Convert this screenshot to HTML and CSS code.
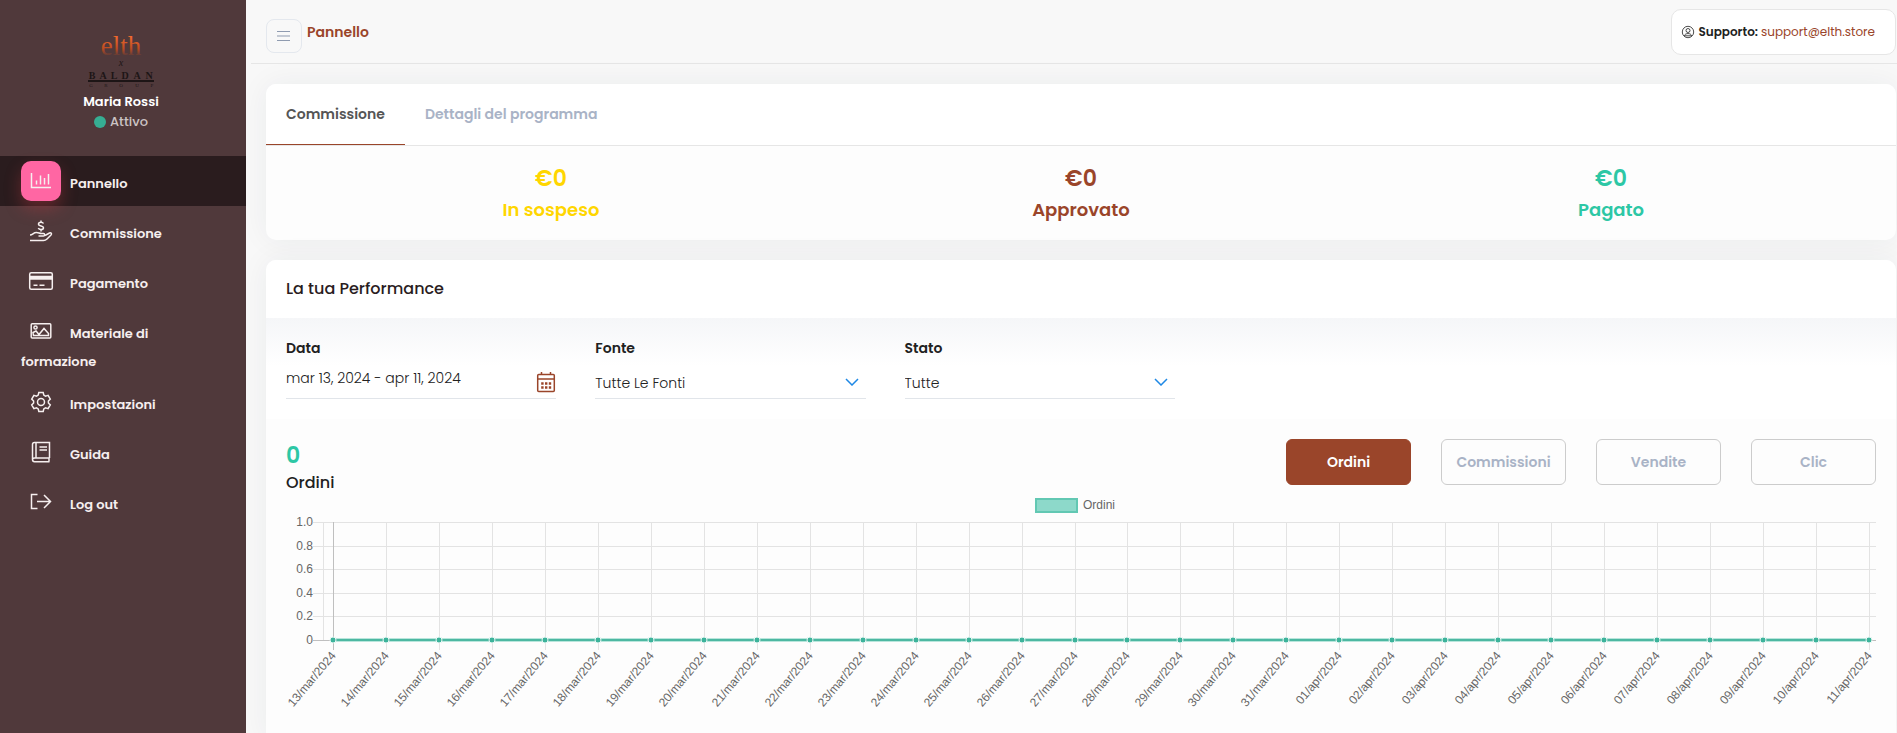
FILE: index.html
```html
<!DOCTYPE html>
<html lang="it">
<head>
    <meta charset="UTF-8">
    <meta name="viewport" content="width=device-width, initial-scale=1.0">
    <title>Pannello</title>
    <link rel="stylesheet" href="styles.css">
</head>
<body>

    <div class="sidebar">
        <div class="profile">
            <svg class="logo" width="68" height="52" viewBox="0 0 68 52">
                <defs>
                    <linearGradient id="copper" x1="0" y1="0" x2="0" y2="1">
                        <stop offset="0.2" stop-color="#f0682e"/>
                        <stop offset="0.6" stop-color="#b94a20"/>
                        <stop offset="0.85" stop-color="#50393b"/>
                    </linearGradient>
                </defs>
                <text class="logo-elth" x="34" y="18" fill="url(#copper)">elth</text>
                <text class="logo-x" x="34" y="29">x</text>
                <text class="logo-baldan" x="5 16 27 38 50 62" y="42">BALDAN</text>
                <path d="M1 44h66" stroke="#1d1516" stroke-width="2"/>
                <text class="logo-group" x="4 19 34 50 65" y="50">GROUP</text>
            </svg>
            <div class="profile-name">Maria Rossi</div>
            <div class="profile-status"><span class="dot"></span>Attivo</div>
        </div>

        <nav class="menu">
            <a href="#pannello" class="active"><svg class="icon" viewBox="-9 -11 40 40"><path d="M1.500 1v14.500h19.500M6.500 8.500v4M10.500 3.500v9M14.500 6v6.500M18.500 2v10.500"/></svg>Pannello</a>
            <a href="#commissione"><svg class="icon" viewBox="-8 -9 40 40"><path d="M14.500 3.500c-.5-1-1.500-1.300-2.500-1.300-1.500 0-2.500.7-2.500 1.800 0 2.700 5 1.200 5 3.700 0 1.200-1 1.800-2.500 1.800-1.300 0-2.300-.5-2.700-1.500M12 .5v2M12 9.500v2M1 15c3 0 3-2.500 6.500-2.500 2 0 3 1 5 1h2c1.500 0 1.500 2.500 0 2.500h-5M16 15.500l4.500-2.500c1.500-.7 2.700.7 1.500 2l-4 4c-1 1-2 1.500-3.500 1.500h-13.500"/></svg>Commissione</a>
            <a href="#pagamento"><svg class="icon" viewBox="-8 -11 40 40"><rect x=".7" y=".7" width="22.600" height="16.600" rx="1.500"/><path d="M1 5.800h22" stroke-width="4"/><path d="M4.500 13.300h4M10.500 13.300h5"/></svg>Pagamento</a>
            <a href="#materiale"><svg class="icon" viewBox="-9 -11 40 40"><rect x="1.200" y="1.700" width="19.600" height="14.200" rx="1"/><circle cx="5.500" cy="5.500" r="1.600"/><path d="M3 10.500l3-1.500 3 3.500 5-6 4.500 5v2h-15z"/></svg>Materiale di formazione</a>
            <a href="#impostazioni"><svg class="icon" viewBox="-9 -9 40 40"><circle cx="11" cy="11" r="3.500"/><path d="M8.800 1.500h4.400l.6 2.600 1.700 1 2.600-.8 2.200 3.800-1.900 1.900v2l1.900 1.900-2.200 3.800-2.600-.8-1.700 1-.6 2.600h-4.400l-.6-2.600-1.700-1-2.600.8-2.200-3.800 1.900-1.900v-2l-1.900-1.900 2.200-3.800 2.600.8 1.700-1z"/></svg>Impostazioni</a>
            <a href="#guida"><svg class="icon" viewBox="-10 -9 40 40"><path d="M18.500 17v-15.500h-15c-1.500 0-2 1-2 2v15c0 1.500 1 2.200 2 2.200h15M18.500 17h-15c-1.200 0-2 .7-2 1.700M18 17v3.500M5 1.500v15.500M8.500 6h7.500M8.500 9h7.500"/></svg>Guida</a>
            <a href="#logout"><svg class="icon" viewBox="-9 -11 40 40"><path d="M7.500 1.500h-6v14h6M7 8.500h13.500M14 2l6.500 6.500-6.500 6.500"/></svg>Log out</a>
        </nav>
    </div>

    <div class="main">
        <header class="topbar">
            <button class="toggle" type="button" aria-label="Menu"><svg width="14" height="12" viewBox="0 0 14 12"><path d="M0 1.500h13M0 6h13M0 10.500h13"/></svg></button>
            <h1>Pannello</h1>
            <div class="support">
                <svg width="14" height="14" viewBox="0 0 14 14"><circle cx="7" cy="7" r="5.700"/><circle cx="7" cy="5.500" r="2"/><path d="M3.500 10.800c.2-3 6.800-3 7 0z"/></svg>
                <b>Supporto:</b> <a href="mailto:support@elth.store">support@elth.store</a>
            </div>
        </header>

        <section class="card">
            <div class="tabs">
                <button type="button" class="tab active">Commissione</button>
                <button type="button" class="tab">Dettagli del programma</button>
            </div>
            <div class="stats">
                <div class="stat pending"><strong>€0</strong><span>In sospeso</span></div>
                <div class="stat approved"><strong>€0</strong><span>Approvato</span></div>
                <div class="stat paid"><strong>€0</strong><span>Pagato</span></div>
            </div>
        </section>

        <section class="card performance">
            <h2>La tua Performance</h2>
            <div class="filters">
                <div class="field">
                    <label for="date">Data</label>
                    <div class="control date">
                        <input id="date" type="text" value="mar 13, 2024 - apr 11, 2024">
                        <svg width="20" height="22" viewBox="0 0 20 22"><rect x="1.700" y="3.500" width="16.600" height="17" rx="1"/><path d="M2 8h16M5.500 1v2.500M14.500 1v2.500"/><path d="M5.200 12.500h10M5.200 16.500h10" stroke-width="2.600" stroke-dasharray="2.400 1.400"/></svg>
                    </div>
                </div>
                <div class="field">
                    <label for="source">Fonte</label>
                    <div class="control">
                        <select id="source"><option>Tutte Le Fonti</option></select>
                        <svg width="14" height="8" viewBox="0 0 14 8"><path d="M1 1l6 6 6-6"/></svg>
                    </div>
                </div>
                <div class="field">
                    <label for="status">Stato</label>
                    <div class="control">
                        <select id="status"><option>Tutte</option></select>
                        <svg width="14" height="8" viewBox="0 0 14 8"><path d="M1 1l6 6 6-6"/></svg>
                    </div>
                </div>
            </div>
            <div class="report">
                <div class="report-head">
                    <div class="total"><strong>0</strong><span>Ordini</span></div>
                    <div class="switch">
                        <button type="button" class="active">Ordini</button>
                        <button type="button">Commissioni</button>
                        <button type="button">Vendite</button>
                        <button type="button">Clic</button>
                    </div>
                </div>
                <div class="legend"><span class="swatch"></span>Ordini</div>
                <svg id="chart" class="chart"></svg>
            </div>
        </section>
    </div>

    <script src="script.js"></script>
</body>
</html>
```
FILE: styles.css
```css
* {
    box-sizing: border-box;
}

body {
    margin: 0;
    min-height: 100vh;
    display: flex;
    background-color: #f8f8f8;
    color: #212121;
    font-family: Poppins, Inter, sans-serif;
    font-size: 14px;
    line-height: 20px;
}

button,
input,
select {
    font-family: inherit;
    font-size: 14px;
}

a {
    text-decoration: none;
}

svg {
    fill: none;
    stroke: currentColor;
}

/* sidebar */
.sidebar {
    flex: none;
    width: 246px;
    background-color: #50393b;
    color: #fff;
    font-size: 13px;
}

.profile {
    height: 156px;
    padding: 37px 4px 0 0;
    text-align: center;
    font-weight: 600;
}

.logo {
    display: block;
    margin: 0 auto 3px;
    overflow: visible;
    font-weight: 400;
}

.logo text {
    stroke: none;
    text-anchor: middle;
    font-family: "Liberation Serif", serif;
}

.logo-elth {
    font-size: 27px;
}

.logo-x {
    font-size: 10px;
    font-style: italic;
    fill: #1d1516;
}

.logo-baldan {
    font-size: 10px;
    font-weight: 700;
    fill: #1d1516;
}

.logo-group {
    font-size: 5px;
    fill: #1d1516;
}

.profile-status {
    display: flex;
    align-items: center;
    justify-content: center;
    gap: 4px;
    color: #cbc4c4;
    font-weight: 500;
}

.dot {
    width: 12px;
    height: 12px;
    border-radius: 50%;
    background-color: #36ae93;
}

.menu a {
    display: block;
    padding: 5px 28px 5px 21px;
    color: #f6efef;
    font-weight: 600;
    line-height: 21px;
}

.menu a.active {
    background-color: #2a1c1e;
}

.menu .icon {
    width: 40px;
    height: 40px;
    margin-right: 9px;
    border-radius: 10px;
    vertical-align: -13px;
    stroke-width: 1.5;
}

.menu .active .icon {
    background-color: #ff66a3;
    box-shadow: 0 8px 16px rgba(200, 60, 70, 0.35);
}

/* top bar */
.main {
    flex: 1;
    min-width: 0;
    display: flex;
    flex-direction: column;
    padding-left: 5px;
}

.topbar {
    display: flex;
    align-items: center;
    height: 64px;
    padding: 0 1px 0 15px;
    border-bottom: 1px solid #e6e6e6;
}

.toggle {
    width: 36px;
    height: 34px;
    margin-top: 8px;
    padding: 3px 0 0;
    border: 1px solid #e4e8ee;
    border-radius: 8px;
    background: none;
    color: #8f9bb0;
}

.topbar h1 {
    margin: 0 auto 0 5px;
    color: #9a452a;
    font-size: 14px;
    font-weight: 600;
}

.support {
    display: flex;
    align-items: center;
    gap: 3px;
    height: 46px;
    padding: 0 20px 0 9px;
    border: 1px solid #e6e6e6;
    border-radius: 10px;
    background-color: #fff;
    font-size: 12px;
}

.support svg {
    stroke-width: 0.8;
}

.support b {
    font-weight: 600;
}

.support a {
    color: #9a452a;
}

/* cards */
.card {
    margin: 20px 1px 0 15px;
    border-radius: 10px;
    background-color: #fdfdfd;
    box-shadow: 0 0 30px rgba(30, 50, 60, 0.06);
}

.tabs {
    display: flex;
    border-bottom: 1px solid #e6e6e6;
    border-radius: 10px 10px 0 0;
    background-color: #fff;
}

.tab {
    height: 61px;
    padding: 0 20px;
    border: 0;
    border-bottom: 1px solid transparent;
    background: none;
    color: #a9b3c6;
    font-weight: 600;
}

.tab.active {
    border-bottom-color: #9a452a;
    color: #555;
}

.stats {
    display: grid;
    grid-template-columns: repeat(3, 1fr);
    padding: 18px 20px 14px;
    text-align: center;
}

.stat strong,
.stat span {
    display: block;
    font-size: 18px;
    font-weight: 600;
    line-height: 32px;
}

.stat strong {
    font-size: 22px;
    line-height: 30px;
}

.pending {
    color: #ffd600;
}

.approved {
    color: #9a452a;
}

.paid {
    color: #2dc7a5;
}

.performance {
    flex: 1;
    border-radius: 10px 10px 0 0;
}

.performance h2 {
    margin: 0;
    padding: 19px 20px;
    border-radius: 10px 10px 0 0;
    background-color: #fff;
    color: #2a1c1e;
    font-size: 16px;
    font-weight: 500;
}

/* filters */
.filters {
    display: flex;
    gap: 39px;
    padding: 20px;
    background: linear-gradient(#f5f6f8, #fff 48px);
}

.field {
    width: 17%;
}

.field label {
    display: block;
    font-weight: 600;
}

.control {
    display: flex;
    align-items: center;
    height: 41px;
    border-bottom: 1px solid #e1e5ea;
}

.control input,
.control select {
    flex: 1;
    min-width: 0;
    height: 30px;
    padding: 0;
    border: 0;
    outline: 0;
    appearance: none;
    background: none;
    color: #212121;
    font-weight: 300;
}

.control select {
    margin-top: 10px;
}

.control svg {
    margin: 8px 7px 0 0;
    color: #1e88e5;
    stroke-width: 1.5;
}

.control.date svg {
    margin-right: 0;
    color: #9a452a;
}

/* report */
.report {
    padding: 20px;
}

.report-head {
    display: flex;
    justify-content: space-between;
}

.total strong,
.total span {
    display: block;
    font-size: 16px;
    font-weight: 500;
    line-height: 20px;
}

.total strong {
    color: #2dc7a5;
    font-size: 22px;
    font-weight: 600;
    line-height: 34px;
}

.switch {
    display: flex;
    gap: 30px;
}

.switch button {
    width: 125px;
    height: 46px;
    padding: 0;
    border: 1px solid #ccc;
    border-radius: 6px;
    background: none;
    color: #a9b3c6;
    font-weight: 600;
}

.switch button.active {
    border-color: #9a452a;
    background-color: #9a452a;
    color: #fff;
}

.legend {
    display: flex;
    align-items: center;
    justify-content: center;
    gap: 5px;
    margin-top: 4px;
    padding-right: 12px;
    color: #666;
    font-family: "Liberation Sans", sans-serif;
    font-size: 12px;
    line-height: 16px;
}

.swatch {
    width: 43px;
    height: 15px;
    border: 2px solid #62c8b3;
    background-color: #8dd9ca;
}

.chart {
    display: block;
    width: 100%;
    height: 206px;
    overflow: visible;
}

.chart text {
    stroke: none;
    fill: #666;
    text-anchor: end;
    font-family: "Liberation Sans", sans-serif;
    font-size: 12px;
}

.chart .grid {
    stroke: #e3e3e3;
}

.chart .zero {
    stroke: #bfbfbf;
}

.chart .halo {
    stroke: #b9e6dc;
    stroke-width: 4;
}

.chart .line {
    stroke: #4db8a2;
    stroke-width: 2;
}

.chart circle {
    fill: #3db39b;
    stroke: #e9f7f4;
}
```
FILE: script.js
```js
const chart = document.getElementById("chart");

// 13 mar - 11 apr
const days = [];
for (let d = 13; d <= 31; d++) days.push(d + "/mar/2024");
for (let d = 1; d <= 11; d++) days.push(String(d).padStart(2, "0") + "/apr/2024");

const ticks = ["1.0", "0.8", "0.6", "0.4", "0.2", "0"];
const top0 = 9;
const bottom = 127;
const left = 47;

function drawChart() {
    const width = chart.clientWidth;
    const step = (width - 7 - left) / (days.length - 1);
    let out = "";

    ticks.forEach((label, i) => {
        const y = Math.round(top0 + i * (bottom - top0) / 5) + 0.5;
        out += `<path class="${label === "0" ? "zero" : "grid"}" d="M27 ${y}H${width}"/>`;
        out += `<text x="27" y="${y + 3}">${label}</text>`;
    });

    out += `<path class="grid" d="M37.5 ${top0}V${bottom}"/>`;
    days.forEach((day, i) => {
        const x = Math.round(left + i * step) + 0.5;
        out += `<path class="${i === 0 ? "zero" : "grid"}" d="M${x} ${top0}V${bottom + 10}"/>`;
        out += `<text transform="translate(${x + 3} ${bottom + 16}) rotate(-50)">${day}</text>`;
    });

    out += `<path class="halo" d="M${left} ${bottom}H${width - 7}"/>`;
    out += `<path class="line" d="M${left} ${bottom}H${width - 7}"/>`;
    days.forEach((day, i) => {
        out += `<circle cx="${Math.round(left + i * step)}" cy="${bottom}" r="3"/>`;
    });

    chart.innerHTML = out;
}

drawChart();
window.addEventListener("resize", drawChart);
```
